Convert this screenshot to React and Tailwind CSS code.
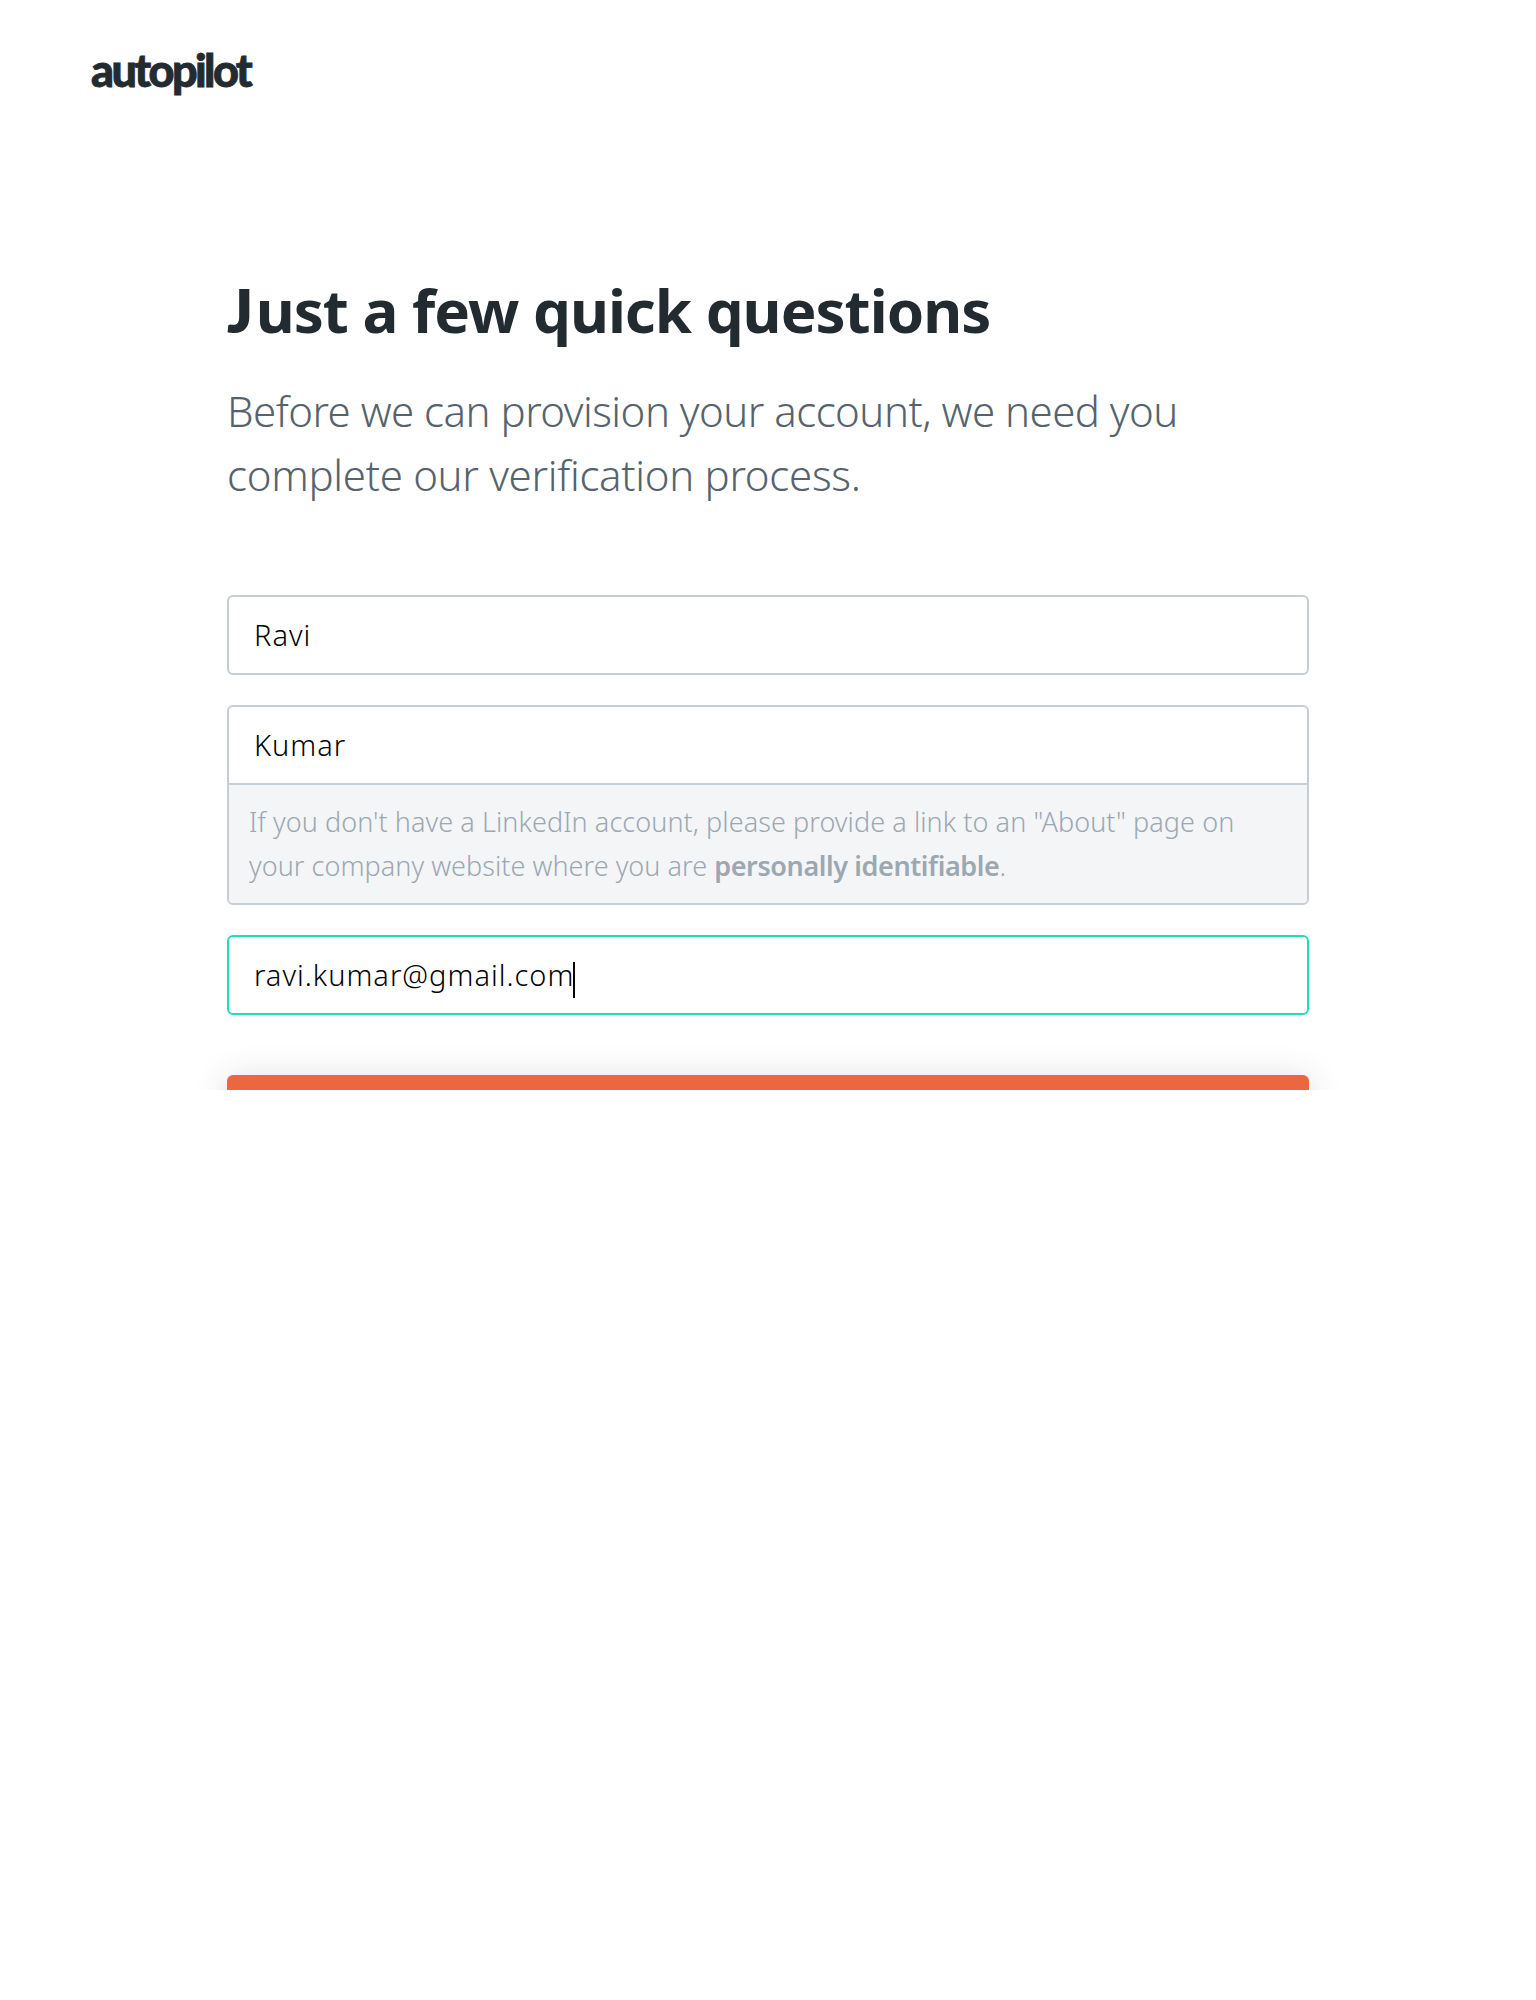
import React from "react";

function Field({ value, focused, children }) {
  return (
    <div
      className={
        focused
          ? "overflow-hidden rounded-[6px] border-2 border-[#1fdcbd] bg-white"
          : "overflow-hidden rounded-[6px] border-2 border-[#c5ced4] bg-white"
      }
    >
      <div className="flex h-[76px] items-center pl-[25px] text-[29px] leading-[40px] font-light tracking-[1px] text-black">
        <span className="whitespace-nowrap">{value}</span>
        {focused && <span className="-ml-px mt-[9px] h-9 w-0.5 bg-black" />}
      </div>
      {children}
    </div>
  );
}

export default function App() {
  return (
    <div className="h-[2000px] w-[1536px] bg-white font-['Noto_Sans',sans-serif]">
      <div className="h-[1090px] overflow-hidden">
        <header className="h-[270px] pt-[50px] pl-[91px]">
          <div className="font-['Lato',sans-serif] text-[45px] leading-[40px] font-black tracking-[-2.6px] text-[#222b30] [font-variant-ligatures:none] [-webkit-text-stroke:0.8px_#222b30]">
            autopilot
          </div>
        </header>

        <main className="ml-[227px] w-[1082px]">
          <h1 className="text-[60px] leading-[80px] font-bold tracking-[-0.98px] whitespace-nowrap text-[#222b30]">
            <span className="font-['Lato',sans-serif] font-extrabold tracking-[2.5px]">J</span>ust a few quick questions
          </h1>

          <div className="mt-[29px] text-[42px] leading-[64px] font-light whitespace-nowrap text-[#56636d]">
            <p className="tracking-[-0.52px]">Before we can provision your account, we need you</p>
            <p className="tracking-[-0.3px]">complete our verification process.</p>
          </div>

          <div className="mt-[88px] flex flex-col gap-[30px]">
            <Field value="Ravi" />
            <Field value="Kumar">
              <div className="border-t-2 border-[#c5ced4] bg-[#f4f5f7] pt-[15px] pb-[15px] pl-5 text-[27px] leading-[44px] font-light whitespace-nowrap text-[#9ba8b2]">
                <p className="tracking-[0.07px]">
                  If you don't have a LinkedIn account, please provide a link to an "About" page on
                </p>
                <p className="tracking-[0.04px]">
                  your company website where you are{" "}
                  <strong className="font-semibold tracking-[-0.4px]">personally identifiable</strong>.
                </p>
              </div>
            </Field>
            <Field value="ravi.kumar@gmail.com" focused />
          </div>

          <button
            type="button"
            aria-label="Submit"
            className="mt-[60px] block h-20 w-full rounded-[6px] bg-[#eb6740] shadow-[0_4px_34px_rgba(34,43,48,0.17)]"
          />
        </main>
      </div>
    </div>
  );
}
